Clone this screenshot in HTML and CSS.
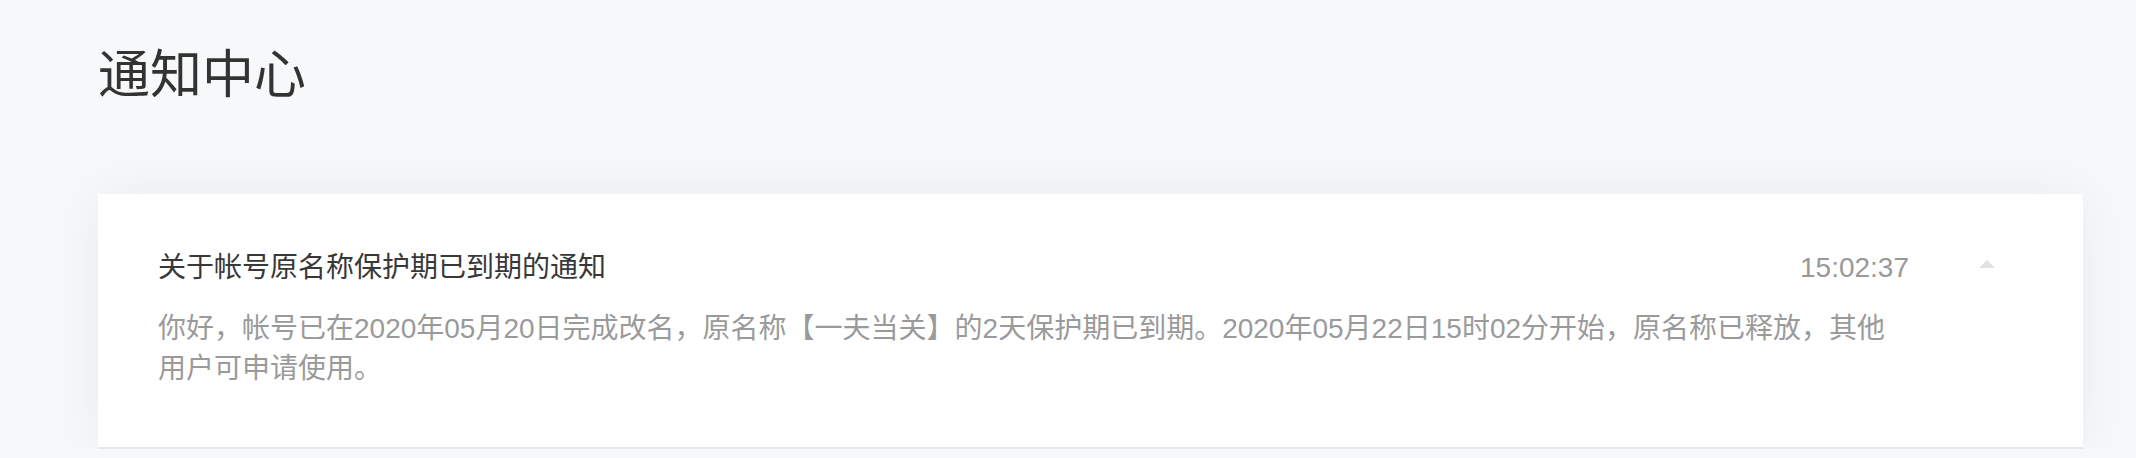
FILE: index.html
```html
<!DOCTYPE html>
<html lang="zh-CN">
<head>
  <meta charset="UTF-8" />
  <meta name="viewport" content="width=device-width, initial-scale=1.0" />
  <title>通知中心</title>
  <link rel="stylesheet" href="styles.css">
</head>
<body>
  <div class="page">
    <h1 class="page-title">通知中心</h1>

    <div class="notice-list">
      <div class="notice open">
        <div class="notice-main">
          <div class="notice-head">
            <span class="notice-title">关于帐号原名称保护期已到期的通知</span>
            <span class="notice-time">15:02:37</span>
          </div>
          <p class="notice-text">你好，帐号已在2020年05月20日完成改名，原名称【一夫当关】的2天保护期已到期。2020年05月22日15时02分开始，原名称已释放，其他用户可申请使用。</p>
        </div>
        <div class="notice-toggle"><span class="arrow-up"></span></div>
      </div>
    </div>
  </div>
</body>
</html>
```

FILE: styles.css
```css
body {
  font-family: "Liberation Sans", "Noto Sans CJK SC", sans-serif;
  background: #f7f8fa;
  margin: 0;
  padding: 0;
}
.page {
  padding: 49px 53px 0 98px;
}
.page-title {
  margin: 0;
  font-size: 52px;
  line-height: 52px;
  font-weight: normal;
  color: #333;
}
.notice-list {
  margin-top: 93px;
}
.notice {
  display: flex;
  background: #fff;
  padding: 54px 88px 58px 60px;
  border-bottom: 2px solid #e6e7eb;
  box-shadow: 0 0 50px rgba(0,0,0,0.06);
}
.notice-main { flex: 1; }
.notice-head {
  display: flex;
  justify-content: space-between;
  align-items: baseline;
}
.notice-title {
  font-size: 28px;
  line-height: 40px;
  color: #383838;
}
.notice-time {
  font-size: 28px;
  line-height: 40px;
  color: #999;
}
.notice-text {
  margin: 21px 0 0;
  max-width: 1740px;
  font-size: 28px;
  line-height: 40px;
  color: #9a9a9a;
}
.notice-toggle {
  width: 16px;
  margin-left: 70px;
  padding-top: 12px;
}
.arrow-up {
  display: block;
  width: 0;
  height: 0;
  border-left: 8px solid transparent;
  border-right: 8px solid transparent;
  border-bottom: 8px solid #e1e1e6;
}
```
